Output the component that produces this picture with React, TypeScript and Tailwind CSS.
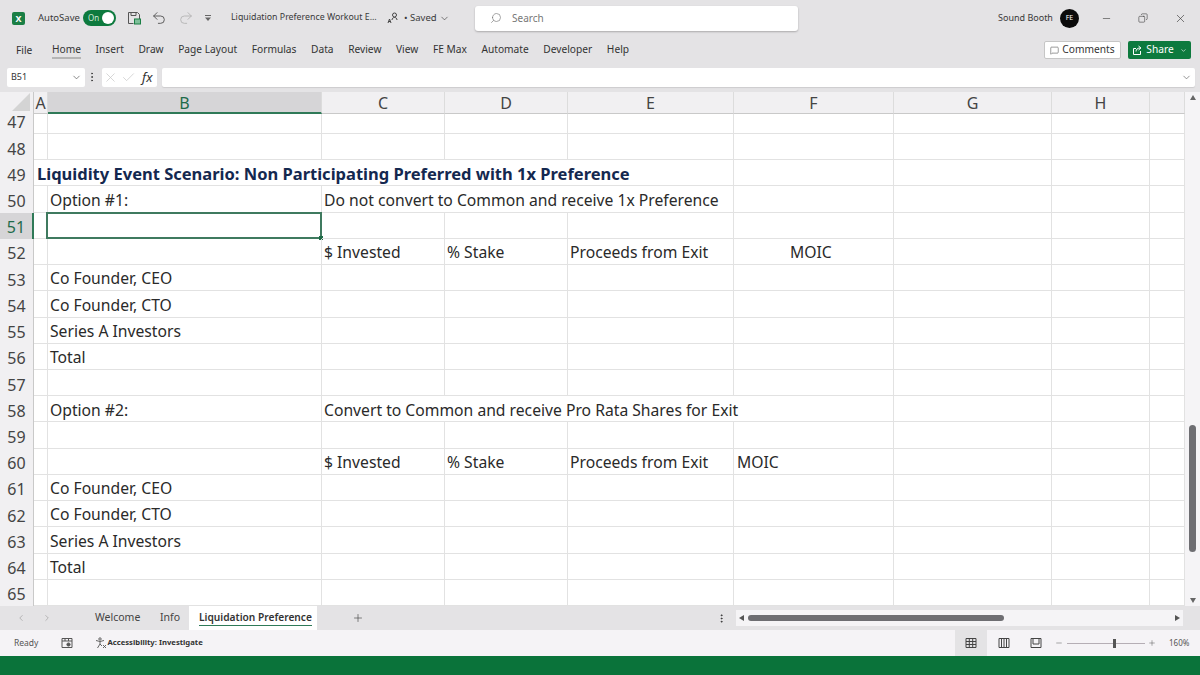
import { ChevronDown, ChevronLeft, ChevronRight, EllipsisVertical, Minus, Plus, Redo2, Search, Undo2, X, Check, MessageSquare, Copy } from 'lucide-react';

// column widths in order: A B C D E F G H I
const colWidths = [14, 274, 123, 123, 166, 160, 158, 98, 35];
const colLetters = ['A', 'B', 'C', 'D', 'E', 'F', 'G', 'H', ''];

type Cell = { col: number; span?: number; text: string; pad?: string; bold?: boolean };

const rows: Record<number, Cell[]> = {
  49: [{ col: 0, span: 5, text: 'Liquidity Event Scenario: Non Participating Preferred with 1x Preference', pad: 'pl-[3px]', bold: true }],
  50: [{ col: 1, text: 'Option #1:' }, { col: 2, span: 3, text: 'Do not convert to Common and receive 1x Preference' }],
  52: [
    { col: 2, text: '$ Invested' },
    { col: 3, text: '% Stake' },
    { col: 4, text: 'Proceeds from Exit' },
    { col: 5, text: 'MOIC', pad: 'pl-[56px]' },
  ],
  53: [{ col: 1, text: 'Co Founder, CEO' }],
  54: [{ col: 1, text: 'Co Founder, CTO' }],
  55: [{ col: 1, text: 'Series A Investors' }],
  56: [{ col: 1, text: 'Total' }],
  58: [{ col: 1, text: 'Option #2:' }, { col: 2, span: 4, text: 'Convert to Common and receive Pro Rata Shares for Exit' }],
  60: [
    { col: 2, text: '$ Invested' },
    { col: 3, text: '% Stake' },
    { col: 4, text: 'Proceeds from Exit' },
    { col: 5, text: 'MOIC', pad: 'pl-[3px]' },
  ],
  61: [{ col: 1, text: 'Co Founder, CEO' }],
  62: [{ col: 1, text: 'Co Founder, CTO' }],
  63: [{ col: 1, text: 'Series A Investors' }],
  64: [{ col: 1, text: 'Total' }],
};

function SheetRow({ n }: { n: number }) {
  const data = rows[n] ?? [];
  const cells: JSX.Element[] = [];
  let i = 0;
  while (i < colWidths.length) {
    const cell = data.find((c) => c.col === i);
    const span = cell?.span ?? 1;
    const width = colWidths.slice(i, i + span).reduce((a, b) => a + b, 0);
    const selected = n === 51 && i === 1;
    cells.push(
      <div
        key={i}
        style={{ width }}
        className={`relative shrink-0 h-full flex items-center whitespace-nowrap pt-[3px] border-r border-b border-[#e2e2e2] ${cell?.pad ?? 'pl-[2px]'} ${
          cell?.bold ? 'font-bold text-[#14284f] text-[16.5px]' : 'text-[#2a2a2a] text-[15.7px]'
        }`}
      >
        {cell?.text}
        {selected && (
          <div className="absolute -left-[2px] -top-px -right-px -bottom-px border-2 border-[#3f7a5f]">
            <div className="absolute -right-[3px] -bottom-[3px] w-[4px] h-[4px] bg-[#1e6b47]" />
          </div>
        )}
      </div>,
    );
    i += span;
  }
  const active = n === 51;
  return (
    <div className="flex h-[26.22px]">
      <div
        className={`w-[34px] shrink-0 flex items-center justify-center pt-[3px] text-[16px] border-r ${
          active ? 'bg-[#d6d5d7] text-[#1f6b4a] border-r-2 border-[#2f7a58]' : 'bg-[#f1f0f2] text-[#444] border-[#c9c9c9]'
        }`}
      >
        {n}
      </div>
      {cells}
    </div>
  );
}

function ExcelLogo() {
  return (
    <div className="w-[13px] h-[13px] rounded-[2px] bg-[#1a7f45] flex items-center justify-center text-white text-[9px] font-bold leading-none">
      X
    </div>
  );
}

function SaveIcon() {
  return (
    <svg width="14" height="14" viewBox="0 0 14 14" fill="none" stroke="#555" strokeWidth="1">
      <path d="M1.5 1.5h9l2 2v5M1.5 1.5v11h5" />
      <path d="M4 1.5v3h5v-3" />
      <rect x="7.5" y="8" width="6" height="5" fill="#7fbf9a" stroke="#1a7f45" />
    </svg>
  );
}

function QuickAccessIcon() {
  return (
    <svg width="8" height="8" viewBox="0 0 8 8" fill="#666">
      <rect x="1" y="1" width="6" height="1" />
      <path d="M1 3.5h6l-3 3.5z" />
    </svg>
  );
}

function CoauthorIcon() {
  return (
    <svg width="12" height="12" viewBox="0 0 12 12" fill="none" stroke="#444" strokeWidth="1">
      <circle cx="7.5" cy="3" r="2" />
      <path d="M5 8c0-1.500 1-2.500 2.500-2.500S10 6.500 10 8" />
      <path d="M1 11l1.500-4 1.500 4M1.600 9.500h1.800" />
    </svg>
  );
}

function ShareIcon() {
  return (
    <svg width="11" height="11" viewBox="0 0 11 11" fill="none" stroke="white" strokeWidth="1">
      <path d="M4 3.5H1.500v6h7V6" />
      <path d="M4 6.500c0-2 1.500-3.500 4-3.500M6.500 1l2.500 2-2.500 2" />
    </svg>
  );
}

function CameraIcon() {
  return (
    <svg width="12" height="12" viewBox="0 0 12 12" fill="none" stroke="#555" strokeWidth="1">
      <path d="M1 1.500h10v9H1zM1 4h10M4 1.500V4M7.500 1.500V4" />
      <circle cx="7.500" cy="7.500" r="1.600" fill="#555" />
    </svg>
  );
}

function AccessibilityIcon() {
  return (
    <svg width="12" height="12" viewBox="0 0 12 12" fill="none" stroke="#555" strokeWidth="0.9">
      <circle cx="5" cy="2" r="1.200" />
      <path d="M1 3.500l4 1 4-1M5 4.500v2.500l-2.500 4M5 7l2 2" />
      <path d="M8 8l3 3M11 8l-3 3" />
    </svg>
  );
}

function NormalViewIcon() {
  return (
    <svg width="12" height="12" viewBox="0 0 12 12" fill="none" stroke="#444" strokeWidth="1">
      <path d="M1 1.500h10v9H1zM1 4.500h10M1 7.500h10M4.300 1.500v9M7.700 1.500v9" />
    </svg>
  );
}

function PageLayoutIcon() {
  return (
    <svg width="12" height="12" viewBox="0 0 12 12" fill="none" stroke="#444" strokeWidth="1">
      <path d="M1 1.500h10v9H1zM3.500 1.500v9M6 1.500v9M8.500 1.500v9" />
    </svg>
  );
}

function PageBreakIcon() {
  return (
    <svg width="12" height="12" viewBox="0 0 12 12" fill="none" stroke="#444" strokeWidth="1">
      <path d="M1 1.500h10v9H1zM3 1.500V7h6V1.500" />
    </svg>
  );
}

const menu = ['Home', 'Insert', 'Draw', 'Page Layout', 'Formulas', 'Data', 'Review', 'View', 'FE Max', 'Automate', 'Developer', 'Help'];

export default function App() {
  const rowNumbers = Array.from({ length: 18 }, (_, i) => 48 + i);

  return (
    <div className="w-[1200px] h-[675px] overflow-hidden flex flex-col bg-[#e4e3e5] text-[#333] font-['Open_Sans','Noto_Sans',sans-serif]">
      {/* Title bar */}
      <div className="h-[36px] shrink-0 flex items-center text-[9.5px] text-[#3a3a3a]">
        <div className="ml-[12px]"><ExcelLogo /></div>
        <span className="ml-[13px] w-[40px]">AutoSave</span>
        <div className="ml-[5px] w-[33px] h-[16px] rounded-full bg-[#0d7a3e] flex items-center justify-between pl-[5px] pr-[2px]">
          <span className="text-[8px] text-[#cfe9d9] leading-none">On</span>
          <div className="w-[12px] h-[12px] rounded-full bg-white" />
        </div>
        <div className="ml-[11px]"><SaveIcon /></div>
        <Undo2 className="ml-[10px] w-[16px] h-[16px] text-[#555]" strokeWidth={1.4} />
        <Redo2 className="ml-[11px] w-[16px] h-[16px] text-[#b5b5b5]" strokeWidth={1.4} />
        <div className="ml-[10px]"><QuickAccessIcon /></div>
        <span className="ml-[19px] w-[149px] whitespace-nowrap text-[8.8px]">Liquidation Preference Workout E...</span>
        <div className="ml-[7px]"><CoauthorIcon /></div>
        <span className="ml-[5px] w-[33px] whitespace-nowrap">• Saved</span>
        <ChevronDown className="ml-[2px] w-[11px] h-[11px]" strokeWidth={1.4} />
        <div className="ml-[25px] w-[323px] h-[25px] rounded-[3px] bg-white shadow-[0_1px_2px_rgba(0,0,0,0.25)] flex items-center pl-[15px] text-[#777]">
          <Search className="w-[12px] h-[12px] -scale-x-100" strokeWidth={1.3} />
          <span className="ml-[10px] text-[10px]">Search</span>
        </div>
        <span className="ml-[200px] w-[55px] whitespace-nowrap text-[9px]">Sound Booth</span>
        <div className="ml-[7px] w-[19px] h-[19px] rounded-full bg-[#0b0b0b] text-white text-[7px] flex items-center justify-center">FE</div>
        <Minus className="ml-[22px] w-[11px] h-[11px]" strokeWidth={1.3} />
        <Copy className="ml-[26px] w-[10px] h-[10px] -scale-x-100" strokeWidth={1.4} />
        <X className="ml-[26px] w-[13px] h-[13px]" strokeWidth={1.2} />
      </div>

      {/* Ribbon tabs */}
      <div className="h-[26px] shrink-0 flex items-center text-[10.2px] text-[#333]">
        <span className="ml-[16px] w-[36px] pt-[3px]">File</span>
        <div className="flex gap-[14.6px] whitespace-nowrap pt-[3px]">
          {menu.map((item) => (
            <span key={item} className={item === 'Home' ? 'border-b-2 border-[#b5b5b5]' : 'border-b-2 border-transparent'}>
              {item}
            </span>
          ))}
        </div>
        <div className="ml-auto flex items-center gap-[7px] mr-[9px] pt-[2px]">
          <div className="w-[77px] h-[18px] bg-white border border-[#c6c6c6] rounded-[2px] flex items-center justify-center gap-[3px]">
            <MessageSquare className="w-[9px] h-[9px]" strokeWidth={1.3} />
            <span>Comments</span>
          </div>
          <div className="w-[63px] h-[18px] bg-[#0d7a3e] rounded-[2px] text-white flex items-center justify-center gap-[3px]">
            <ShareIcon />
            <span>Share</span>
            <ChevronDown className="ml-[3px] w-[7px] h-[7px]" strokeWidth={2} />
          </div>
        </div>
      </div>

      {/* Formula bar */}
      <div className="h-[30px] shrink-0 flex items-center pl-[7px] pr-[5px]">
        <div className="w-[78px] h-[19px] bg-white rounded-[2px] flex items-center justify-between pl-[4px] pr-[3px] text-[9px]">
          <span>B51</span>
          <ChevronDown className="w-[11px] h-[11px] text-[#555]" strokeWidth={1.5} />
        </div>
        <EllipsisVertical className="mx-[1px] w-[12px] h-[12px] text-[#444]" strokeWidth={2} />
        <div className="ml-[3px] w-[55px] h-[19px] bg-white rounded-[2px] flex items-center pl-[1px]">
          <X className="w-[15px] h-[15px] text-[#c4c4c4]" strokeWidth={1.1} />
          <Check className="ml-[3px] w-[15px] h-[15px] text-[#c4c4c4]" strokeWidth={1.1} />
          <span className="ml-[6px] font-['Liberation_Serif',serif] italic text-[13px] text-[#333] leading-none">fx</span>
        </div>
        <div className="ml-[5px] flex-1 h-[19px] bg-white rounded-[2px] flex items-center justify-end pr-[3px] shadow-[0_1px_1px_rgba(0,0,0,0.1)]">
          <ChevronDown className="w-[11px] h-[11px] text-[#666]" strokeWidth={1.5} />
        </div>
      </div>

      {/* Sheet + vertical scrollbar */}
      <div className="flex-1 flex min-h-0 bg-white">
        <div className="w-[1185px] shrink-0 flex flex-col overflow-hidden">
          {/* Column headers */}
          <div className="h-[22px] shrink-0 flex text-[16px] text-[#444] bg-[#f1f0f2]">
            <div className="w-[34px] shrink-0 bg-[#f1f0f2] border-r border-[#c9c9c9] flex items-end justify-end p-[3px]">
              <div className="w-0 h-0 border-l-[18px] border-l-transparent border-b-[18px] border-b-[#d4d4d4]" />
            </div>
            {colWidths.map((w, i) => (
              <div
                key={i}
                style={{ width: w }}
                className={`shrink-0 flex items-center justify-center pt-[1px] leading-none border-r border-[#dcdcdc] ${
                  i === 1 ? 'bg-[#d6d5d7] text-[#1f6b4a] border-b-2 border-b-[#2f7a58]' : 'border-b border-b-[#c9c9c9]'
                }`}
              >
                {colLetters[i]}
              </div>
            ))}
          </div>

          {/* Row 47 is partly under the header */}
          <div className="flex h-[20px] shrink-0">
            <div className="w-[34px] shrink-0 bg-[#f1f0f2] border-r border-[#c9c9c9] text-[16px] text-[#444] flex items-start justify-center pt-[1px]">
              <span className="leading-[14px]">47</span>
            </div>
            {colWidths.map((w, i) => (
              <div key={i} style={{ width: w }} className="shrink-0 border-r border-b border-[#e2e2e2]" />
            ))}
          </div>

          {rowNumbers.map((n) => (
            <SheetRow key={n} n={n} />
          ))}
        </div>

        <div className="flex-1 bg-[#f5f4f6] flex flex-col items-center pt-[2px] pb-[1px]">
          <div className="w-0 h-0 mt-[1px] border-x-[3.5px] border-x-transparent border-b-[5px] border-b-[#666]" />
          <div className="w-[7px] h-[127px] mt-[325px] rounded-full bg-[#6e6e72]" />
          <div className="w-0 h-0 mt-auto mb-[2px] border-x-[3.5px] border-x-transparent border-t-[5px] border-t-[#666]" />
        </div>
      </div>

      {/* Sheet tabs */}
      <div className="h-[24px] shrink-0 flex items-center bg-[#e4e3e5] text-[10.5px] text-[#444]">
        <ChevronLeft className="ml-[16px] w-[10px] h-[10px] text-[#999]" strokeWidth={1.5} />
        <ChevronRight className="ml-[16px] w-[10px] h-[10px] text-[#999]" strokeWidth={1.5} />
        <span className="ml-[43px] w-[46px]">Welcome</span>
        <span className="ml-[19px] w-[20px]">Info</span>
        <div className="ml-[9px] w-[128px] h-[24px] bg-white flex items-center pl-[10px]">
          <span className="font-semibold text-[#333] border-b border-[#2f7a58] leading-[15px] text-[10.2px] whitespace-nowrap">Liquidation Preference</span>
        </div>
        <Plus className="ml-[35px] w-[12px] h-[12px] text-[#444]" strokeWidth={1.3} />
        <EllipsisVertical className="ml-[352px] w-[11px] h-[11px] text-[#333]" strokeWidth={2} />
        <div className="ml-[9px] w-[447px] h-[16px] bg-[#f5f4f6] flex items-center px-[3px]">
          <div className="w-0 h-0 border-y-[3.5px] border-y-transparent border-r-[5px] border-r-[#555]" />
          <div className="ml-[4px] w-[256px] h-[6px] rounded-full bg-[#6e6e72]" />
          <div className="ml-auto w-0 h-0 border-y-[3.5px] border-y-transparent border-l-[5px] border-l-[#555]" />
        </div>
      </div>

      {/* Status bar */}
      <div className="h-[26px] shrink-0 flex items-center bg-[#f5f3f6] text-[8.5px] text-[#555] whitespace-nowrap">
        <span className="ml-[14px]">Ready</span>
        <div className="ml-[23px]"><CameraIcon /></div>
        <div className="ml-[22px]"><AccessibilityIcon /></div>
        <span className="font-bold text-[#333] text-[7.7px]">Accessibility: Investigate</span>
        <div className="ml-auto w-[32px] h-[26px] bg-[#e4e3e5] flex items-center justify-center"><NormalViewIcon /></div>
        <div className="ml-[11px]"><PageLayoutIcon /></div>
        <div className="ml-[20px]"><PageBreakIcon /></div>
        <Minus className="ml-[13px] w-[8px] h-[8px]" strokeWidth={1.5} />
        <div className="relative ml-[4px] w-[78px] h-px bg-[#b5aeb5]">
          <div className="absolute left-[46px] -top-[4px] w-[3px] h-[9px] bg-[#555]" />
        </div>
        <Plus className="ml-[3px] w-[8px] h-[8px]" strokeWidth={1.5} />
        <span className="ml-[13px] mr-[11px] w-[20px] text-[8px]">160%</span>
      </div>

      {/* Green bottom band */}
      <div className="h-[19px] shrink-0 bg-[#0a733a]" />
    </div>
  );
}
